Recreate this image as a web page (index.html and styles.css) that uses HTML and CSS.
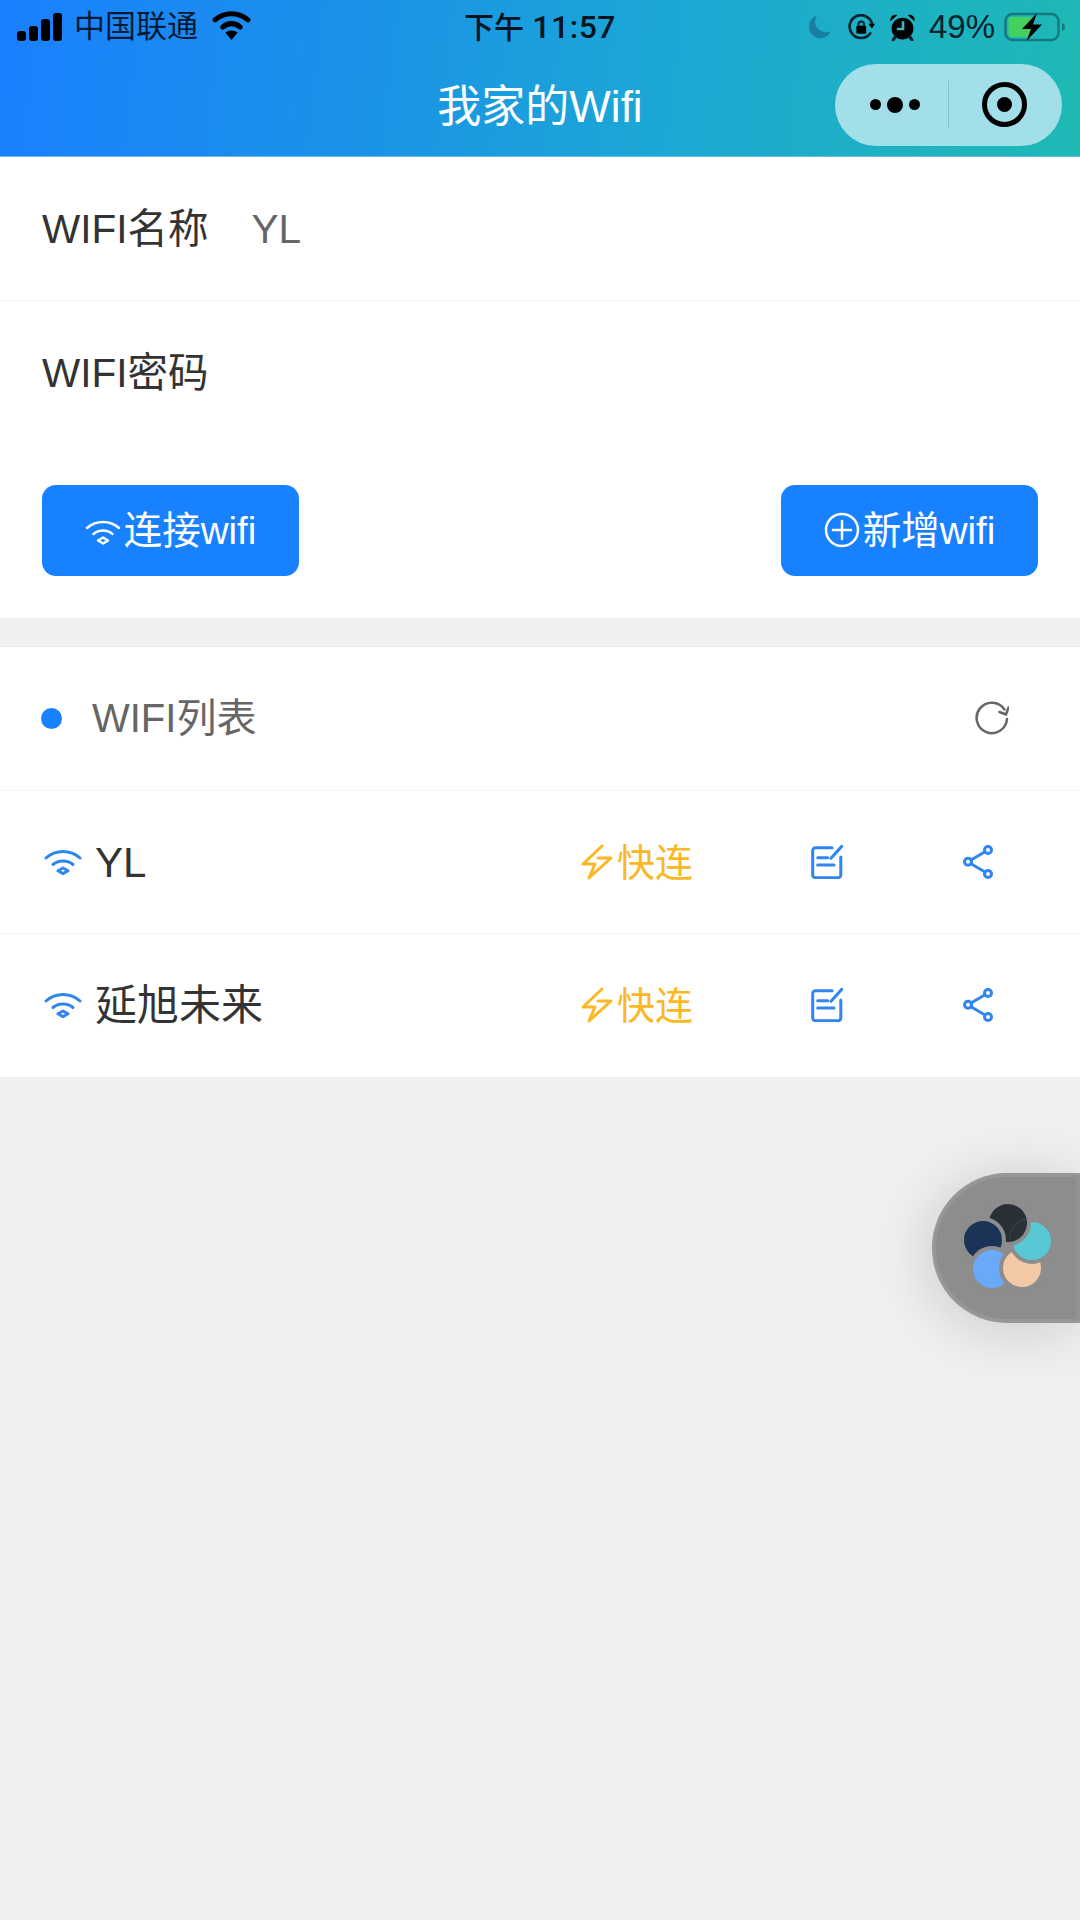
FILE: index.html
```html
<!DOCTYPE html>
<html lang="zh">
<head>
<meta charset="utf-8">
<title>我家的Wifi</title>
<link rel="stylesheet" href="styles.css">
</head>
<body>
<div class="app">
  <header class="header">
    <div class="status">
      <div class="status-left">
        <svg class="i-signal" viewBox="0 0 45 28"><rect x="0" y="18" width="9" height="10" rx="3"/><rect x="12" y="13" width="9" height="15" rx="3"/><rect x="24" y="6" width="9" height="22" rx="3"/><rect x="36" y="0" width="9" height="28" rx="3"/></svg>
        <span class="carrier">中国联通</span>
        <svg class="i-swifi" viewBox="0 0 38 29"><path class="sw" d="M3 9.500C12 1.500 26 1.500 35 9.500"/><path class="sw" d="M10.500 16.500C15.500 12 22.500 12 27.500 16.500"/><path d="M19 29L13 21.800C16.500 19.200 21.500 19.200 25 21.800Z"/></svg>
      </div>
      <div class="time"><span>下午</span> <span class="time-num">11:57</span></div>
      <div class="status-right">
        <svg class="i-moon" viewBox="0 0 24 25"><path d="M9 0C6 4 5.500 9.500 8.500 13.500C11.500 17.500 17.500 19 23 17C20.500 22 15 25 10.500 24C4 23 0 18 0 12.500C0 6.500 4 1.500 9 0Z"/></svg>
        <svg class="i-lock" viewBox="0 0 26 26"><path class="st" d="M21.500 18.500A11 11 0 1 1 23.500 11"/><path d="M19.500 9.500H26L23 14Z"/><rect x="8" y="11" width="9.500" height="8" rx="1.500"/><path class="st-thin" d="M10 11V9.500A2.800 2.800 0 0 1 15.500 9.500V11"/></svg>
        <svg class="i-alarm" viewBox="0 0 24 26"><path d="M0.500 7A5 5 0 0 1 7 1Z"/><path d="M23.500 7A5 5 0 0 0 17 1Z"/><circle cx="12" cy="14" r="10.500"/><path class="hand" d="M12.500 7V14.500H6.500"/><path class="st" d="M5 22L3 25M19 22L21 25"/></svg>
        <span class="pct">49%</span>
        <svg class="i-batt" viewBox="0 0 62 30"><rect class="b-out" x="1.500" y="2" width="53" height="26" rx="7"/><rect class="b-fill" x="4.500" y="5" width="24" height="20" rx="3"/><path class="b-nub" d="M58 11C60 11.500 61 13 61 15S60 18.500 58 19Z"/><path d="M33 1L18 17H27L22.500 29L38 12.500H29Z"/></svg>
      </div>
    </div>
    <div class="nav">
      <div class="nav-side"></div>
      <h1 class="title">我家的Wifi</h1>
      <div class="nav-side nav-end">
        <div class="capsule">
          <div class="dots"><i class="dot"></i><i class="dot dot-big"></i><i class="dot"></i></div>
          <div class="cap-div"></div>
          <div class="cap-right"><div class="target"><i class="target-in"></i></div></div>
        </div>
      </div>
    </div>
  </header>

  <section class="form">
    <div class="field field-line"><span class="label">WIFI名称</span><span class="value">YL</span></div>
    <div class="field"><span class="label">WIFI密码</span></div>
    <div class="actions">
      <button class="btn">
        <svg class="i-bwifi" viewBox="0 0 36 26"><path class="st" d="M2 9C6.500 5 12 3 18 3S29.500 5 34 9"/><path class="st" d="M8.500 15C11 12.800 14.300 11.500 18 11.500S25 12.800 27.500 15"/><path class="hole" d="M18 18.500L23 21.500L18 24.500L13 21.500Z"/></svg>
        <span>连接wifi</span>
      </button>
      <button class="btn">
        <svg class="i-plus" viewBox="0 0 36 36"><circle class="st" cx="18" cy="18" r="16"/><path class="st" d="M18 9V27M9 18H27"/></svg>
        <span>新增wifi</span>
      </button>
    </div>
  </section>

  <section class="list">
    <div class="row row-head">
      <i class="bullet"></i>
      <span class="list-title">WIFI列表</span>
      <svg class="i-refresh" viewBox="0 0 34 34"><path class="st" d="M32 18A15.200 15.200 0 1 1 29.500 8.500"/><path class="st" d="M33.500 6.500L31 13.500L24.500 11"/></svg>
    </div>
    <div class="row">
      <svg class="i-wifi" viewBox="0 0 38 26"><path class="st" d="M2 9C6.500 5 12.500 2.500 19 2.500S31.500 5 36 9"/><path class="st" d="M9 15.500C11.500 13.300 15 12 19 12S26.500 13.300 29 15.500"/><path class="hole-b" d="M19 19L24 21.800L19 24.600L14 21.800Z"/></svg>
      <span class="name">YL</span>
      <div class="quick">
        <svg class="i-bolt" viewBox="0 0 32 36"><path class="st" d="M21 2L2 20H14L8 34L30 14H17"/></svg>
        <span class="quick-text">快连</span>
      </div>
      <div class="cell"><svg class="i-edit" viewBox="0 0 32 34"><path class="st" d="M21 2.700H4.500A2.800 2.800 0 0 0 1.700 5.500V30A2.800 2.800 0 0 0 4.500 32.800H27A2.800 2.800 0 0 0 29.800 30V12"/><path class="st" d="M20 13.300L31 1M6.700 12.700H16.700M6.700 20H23"/></svg></div>
      <div class="cell"><svg class="i-share" viewBox="0 0 30 34"><circle class="st" cx="25" cy="5" r="3.500"/><circle class="st" cx="5" cy="16.800" r="3.500"/><circle class="st" cx="25" cy="29" r="3.500"/><path class="st" d="M8 15L22 6.800M8 18.800L22 27"/></svg></div>
    </div>
    <div class="row">
      <svg class="i-wifi" viewBox="0 0 38 26"><path class="st" d="M2 9C6.500 5 12.500 2.500 19 2.500S31.500 5 36 9"/><path class="st" d="M9 15.500C11.500 13.300 15 12 19 12S26.500 13.300 29 15.500"/><path class="hole-b" d="M19 19L24 21.800L19 24.600L14 21.800Z"/></svg>
      <span class="name">延旭未来</span>
      <div class="quick">
        <svg class="i-bolt" viewBox="0 0 32 36"><path class="st" d="M21 2L2 20H14L8 34L30 14H17"/></svg>
        <span class="quick-text">快连</span>
      </div>
      <div class="cell"><svg class="i-edit" viewBox="0 0 32 34"><path class="st" d="M21 2.700H4.500A2.800 2.800 0 0 0 1.700 5.500V30A2.800 2.800 0 0 0 4.500 32.800H27A2.800 2.800 0 0 0 29.800 30V12"/><path class="st" d="M20 13.300L31 1M6.700 12.700H16.700M6.700 20H23"/></svg></div>
      <div class="cell"><svg class="i-share" viewBox="0 0 30 34"><circle class="st" cx="25" cy="5" r="3.500"/><circle class="st" cx="5" cy="16.800" r="3.500"/><circle class="st" cx="25" cy="29" r="3.500"/><path class="st" d="M8 15L22 6.800M8 18.800L22 27"/></svg></div>
    </div>
  </section>

  <div class="float">
    <svg class="i-petals" viewBox="0 0 96 96">
      <defs><clipPath id="teal-clip"><circle cx="74" cy="43" r="23"/></clipPath></defs>
      <circle cx="50" cy="25" r="21" fill="#2a3038"/>
      <circle cx="25" cy="42" r="21" fill="#1c3358"/>
      <circle cx="34" cy="71" r="21" fill="#6aa8f8"/>
      <circle cx="64" cy="70" r="21" fill="#f4c9a6"/>
      <circle cx="74" cy="43" r="21" fill="#58c8d4"/>
      <circle cx="50" cy="25" r="21" fill="#2a3038" clip-path="url(#teal-clip)"/>
    </svg>
  </div>
</div>
</body>
</html>
```
FILE: styles.css
```css
* { box-sizing: border-box; margin: 0; padding: 0; }
html, body { width: 1080px; height: 1920px; overflow: hidden; }
body { background: #f0f0f0; font-family: "Liberation Sans", "Noto Sans CJK SC", sans-serif; color: #333; }
.app { position: relative; width: 1080px; height: 1920px; background: #f0f0f0; overflow: hidden; }
svg { display: block; flex: none; }
.st { fill: none; stroke: currentColor; stroke-width: 3; stroke-linecap: round; stroke-linejoin: round; }

.header { height: 157px; background: linear-gradient(97deg, #1a80ff 0%, #1b93e6 35%, #1ba7d6 60%, #1eb9b4 100%); border-bottom: 1px solid #6cb6ee; color: #000; }
.status { height: 54px; padding: 0 14px; display: grid; grid-template-columns: 1fr auto 1fr; align-items: center; }
.status-left { display: flex; align-items: center; padding-left: 3px; }
.i-signal { width: 45px; height: 28px; margin-right: 12px; }
.carrier { font-size: 31px; line-height: 40px; margin-right: 14px; color: #051a33; }
.i-swifi { width: 39px; height: 30px; margin-top: -4px; }
.sw { fill: none; stroke: currentColor; stroke-width: 5; stroke-linecap: round; }
.time { font-size: 30px; font-weight: 500; color: #04151f; line-height: 40px; }
.time-num { font-family: Roboto, "Liberation Sans", sans-serif; font-size: 32px; font-weight: 500; letter-spacing: .5px; }
.status-right { display: flex; align-items: center; justify-content: flex-end; }
.i-moon { width: 23px; height: 26px; fill: #1a7f9f; margin-right: 16px; }
.i-lock { width: 27px; height: 27px; color: #06222c; margin-right: 15px; }
.i-lock .st { stroke-width: 2.500; }
.st-thin { fill: none; stroke: #06222c; stroke-width: 2; }
.i-alarm { width: 25px; height: 27px; color: #06222c; margin-right: 14px; }
.hand { fill: none; stroke: #3db4c4; stroke-width: 2.500; }
.pct { font-size: 33px; line-height: 40px; color: #06222c; margin-right: 9px; }
.i-batt { width: 62px; height: 30px; }
.b-out { fill: none; stroke: #157a80; stroke-width: 2.500; }
.b-fill { fill: #45d25c; }
.b-nub { fill: #157a80; }

.nav { height: 102px; display: grid; grid-template-columns: 1fr auto 1fr; align-items: center; padding: 0 18px; }
.title { font-size: 44px; font-weight: 400; color: #fff; line-height: 60px; margin-top: 4px; }
.nav-end { display: flex; justify-content: flex-end; }
.capsule { width: 227px; height: 82px; margin-top: -1px; border-radius: 41px; background: #a2dfe8; display: flex; align-items: center; }
.dots { width: 113px; padding-left: 6px; display: flex; align-items: center; justify-content: center; gap: 6px; }
.dot { width: 11px; height: 11px; border-radius: 50%; background: #000; }
.dot-big { width: 16px; height: 16px; }
.cap-div { width: 1px; height: 48px; background: #85c4cf; }
.cap-right { flex: 1; display: flex; justify-content: center; padding-right: 3px; }
.target { width: 45px; height: 45px; border: 5px solid #000; border-radius: 50%; display: flex; align-items: center; justify-content: center; }
.target-in { width: 15px; height: 15px; border-radius: 50%; background: #000; }

.form { background: #fff; height: 461px; }
.field { height: 143px; padding: 0 42px; display: flex; align-items: center; gap: 43px; }
.field-line { height: 144px; border-bottom: 1px solid #f0f0f0; }
.label { font-size: 40.500px; line-height: 50px; color: #333; }
.value { font-size: 40.500px; line-height: 50px; color: #666; }
.actions { display: flex; justify-content: space-between; padding: 41px 42px 0; }
.btn { width: 257px; height: 91px; border: 0; border-radius: 14px; background: #1781ff; color: #fff; font: inherit; font-size: 38.500px; line-height: 50px; display: flex; align-items: center; justify-content: center; gap: 3px; }
.i-bwifi { width: 36px; height: 26px; margin-top: 3px; }
.i-bwifi .st { stroke-width: 2.500; }
.hole { fill: none; stroke: #fff; stroke-width: 2.500; stroke-linejoin: round; }
.i-plus { width: 36px; height: 36px; margin-top: -2px; }
.i-plus .st { stroke-width: 2.500; }

.list { margin-top: 28px; background: #fff; border-top: 1px solid #e9e9e9; }
.row { height: 143.500px; padding: 0 27px 0 44px; display: flex; align-items: center; border-bottom: 1px solid #f6f6f6; }
.row:last-child { height: 142.500px; border-bottom: 0; }
.row-head { padding-left: 41px; padding-right: 71px; }
.bullet { width: 21px; height: 21px; border-radius: 50%; background: #1781ff; margin-right: 30px; }
.list-title { flex: 1; font-size: 40px; line-height: 50px; color: #666; }
.i-refresh { width: 34px; height: 34px; color: #666; }
.i-refresh .st { stroke-width: 2.500; }
.i-wifi { width: 38px; height: 26px; color: #2f86f0; }
.name { flex: 1; font-size: 42px; line-height: 50px; color: #333; margin-left: 13px; padding-top: 2px; }
.quick { width: 170px; display: flex; align-items: center; gap: 4px; color: #fbb724; font-size: 38px; line-height: 50px; }
.quick-text { padding-top: 2px; }
.i-bolt { width: 32px; height: 36px; }
.hole-b { fill: none; stroke: currentColor; stroke-width: 3; stroke-linejoin: round; }
.cell { width: 151px; display: flex; justify-content: center; color: #2f86f0; }
.i-edit { width: 32px; height: 34px; }
.i-share { width: 30px; height: 34px; }

.float { position: absolute; left: 932px; top: 1173px; width: 148px; height: 150px; border-radius: 75px 0 0 75px; background: #8d8d8d; border: 4px solid #979797; border-right-color: #939393; box-shadow: -4px 6px 60px rgba(0,0,0,.16); display: flex; align-items: center; padding-left: 22px; }
.i-petals { width: 96px; height: 96px; margin-top: -4px; }
.i-petals circle { stroke: #8d8d8d; stroke-width: 4; }
```
